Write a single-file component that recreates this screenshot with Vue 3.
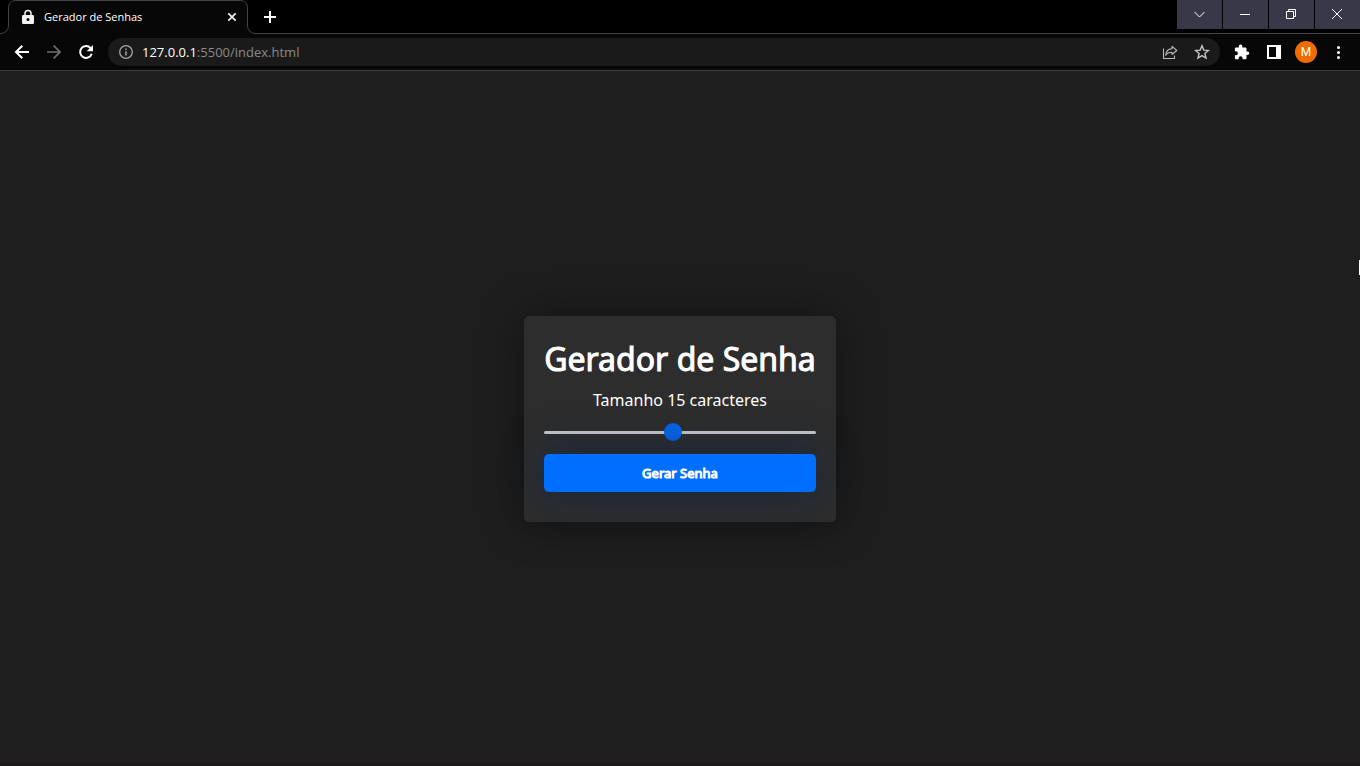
<script setup>
import { ref } from 'vue'

const length = ref(15)
</script>

<template>
  <div class="window">
    <header class="chrome">
      <div class="strip">
        <div class="tab">
          <svg class="outline" viewBox="0 0 256 34" aria-hidden="true">
            <path d="M0 34V33.500C5 33.500 8.500 30 8.500 25V8C8.500 3.500 11.500.5 16 .5H240C244.500.5 247.500 3.500 247.500 8V25C247.500 30 251 33.500 256 33.500V34Z" fill="#070707" />
            <path d="M0 33.500C5 33.500 8.500 30 8.500 25V8C8.500 3.500 11.500.5 16 .5H240C244.500.5 247.500 3.500 247.500 8V25C247.500 30 251 33.500 256 33.500" fill="none" stroke="#444646" />
          </svg>
          <svg class="lock" viewBox="0 0 12 16" aria-hidden="true">
            <path d="M3 7V4.500a3 3 0 0 1 6 0V7" fill="none" stroke="#f1f1f1" stroke-width="1.500" />
            <path fill-rule="evenodd" d="M1.500 6h9A1.300 1.300 0 0 1 12 7.300v6.400A1.300 1.300 0 0 1 10.500 15h-9A1.300 1.300 0 0 1 0 13.700V7.300A1.300 1.300 0 0 1 1.500 6ZM6 9a1.500 1.500 0 1 0 0 3a1.500 1.500 0 0 0 0-3Z" fill="#f1f1f1" />
          </svg>
          <span class="tab-title">Gerador de Senhas</span>
          <button class="plain close-tab" aria-label="Fechar guia">
            <svg width="16" height="16" viewBox="0 0 16 16"><path d="M4.300 4.300l7.400 7.400M11.700 4.300l-7.400 7.400" stroke="#f1f1f1" stroke-width="1.700" /></svg>
          </button>
        </div>
        <button class="plain new-tab" aria-label="Nova guia">
          <svg width="16" height="16" viewBox="0 0 16 16"><path d="M8 2v12M2 8h12" stroke="#fff" stroke-width="2" /></svg>
        </button>
        <div class="controls">
          <button aria-label="Pesquisar guias">
            <svg width="16" height="16" viewBox="0 0 16 16"><path d="M2.500 5l5 5l5-5" /></svg>
          </button>
          <button aria-label="Minimizar">
            <svg width="16" height="16" viewBox="0 0 16 16"><path d="M2 7.500h10" /></svg>
          </button>
          <button aria-label="Restaurar">
            <svg width="16" height="16" viewBox="0 0 16 16"><path d="M2.500 4.500h7v7h-7ZM4.500 4.500v-2h7v7h-2" /></svg>
          </button>
          <button aria-label="Fechar">
            <svg width="16" height="16" viewBox="0 0 16 16"><path d="M2 2l10 10M12 2L2 12" /></svg>
          </button>
        </div>
      </div>

      <div class="toolbar">
        <nav class="nav">
          <button class="plain" aria-label="Voltar">
            <svg width="16" height="16" viewBox="0 0 16 16"><path d="M15 8H2.500M8.300 1.700L2 8l6.300 6.300" fill="none" stroke="#fff" stroke-width="2" /></svg>
          </button>
          <button class="plain" aria-label="Avançar" disabled>
            <svg width="16" height="16" viewBox="0 0 16 16"><path d="M1 8h12.500M7.700 1.700L14 8l-6.300 6.300" fill="none" stroke="#707070" stroke-width="1.700" /></svg>
          </button>
          <button class="plain" aria-label="Recarregar">
            <svg width="16" height="16" viewBox="0 0 16 16"><path d="M12.600 4.200A5.900 5.900 0 1 0 13.700 9.700" fill="none" stroke="#fff" stroke-width="2" /><path d="M15 1v6.300H8.700Z" fill="#fff" /></svg>
          </button>
        </nav>
        <div class="address">
          <svg width="16" height="16" viewBox="0 0 16 16" aria-hidden="true">
            <circle cx="8" cy="8" r="6.300" fill="none" stroke="#a5a8ab" stroke-width="1.300" />
            <path d="M8 7.200v4.200M8 4.500v1.500" stroke="#a5a8ab" stroke-width="1.500" />
          </svg>
          <span class="url"><span class="host">127.0.0.1</span>:5500/index.html</span>
          <button class="plain share" aria-label="Compartilhar">
            <svg width="16" height="16" viewBox="0 0 16 16" fill="none" stroke="#b9b9b9" stroke-width="1.100">
              <path d="M1.500 4.500v10h11v-3" />
              <path d="M10 2.300L14.800 6.500L10 10.500V8.200C7 8.200 5 9.200 3.700 11.300C4 7.500 6 5 10 4.600Z" stroke-linejoin="round" />
            </svg>
          </button>
          <button class="plain" aria-label="Favoritar">
            <svg width="16" height="16" viewBox="0 0 16 16"><path d="M8 1.800l1.800 4.300l4.600.4l-3.500 3l1.100 4.500L8 11.600L4 14l1.100-4.500l-3.500-3l4.600-.4Z" fill="none" stroke="#c5c5c5" stroke-width="1.400" /></svg>
          </button>
        </div>
        <div class="actions">
          <button class="plain" aria-label="Extensões">
            <svg width="16" height="16" viewBox="0 0 16 16"><path d="M13.500 7.500h-1V4.700c0-.7-.6-1.300-1.300-1.300H8.400v-1a1.800 1.800 0 0 0-3.600 0v1H2.100C1.400 3.400.9 4 .9 4.700v2.600h1a2 2 0 0 1 0 4h-1v2.600c0 .7.500 1.300 1.200 1.300h2.600v-1a1.900 1.900 0 0 1 3.900 0v1h2.600c.7 0 1.300-.6 1.300-1.300v-2.800h1a1.800 1.800 0 0 0 0-3.600Z" fill="#fff" /></svg>
          </button>
          <button class="plain" aria-label="Painel lateral">
            <svg width="16" height="16" viewBox="0 0 16 16"><path fill-rule="evenodd" d="M1 1h14v14H1ZM3 3v10h7V3Z" fill="#fff" /></svg>
          </button>
          <button class="avatar" aria-label="Perfil">M</button>
          <button class="plain" aria-label="Menu">
            <svg width="16" height="16" viewBox="0 0 16 16" fill="#fff"><circle cx="8.500" cy="3.500" r="1.500" /><circle cx="8.500" cy="8.500" r="1.500" /><circle cx="8.500" cy="13.500" r="1.500" /></svg>
          </button>
        </div>
      </div>
    </header>

    <main class="page">
      <form class="card" @submit.prevent>
        <h1>Gerador de Senha</h1>
        <label for="length">Tamanho {{ length }} caracteres</label>
        <input id="length" v-model="length" type="range" min="6" max="25" />
        <button class="generate" type="submit">Gerar Senha</button>
      </form>
    </main>
    <span class="caret"></span>
    <span class="edge"></span>
  </div>
</template>

<style>
body {
  margin: 0;
  background: #1e1e1e;
}
</style>

<style scoped>
* {
  box-sizing: border-box;
}

.window {
  position: relative;
  display: flex;
  flex-direction: column;
  min-height: 100vh;
  font-family: "Noto Sans", sans-serif;
  color: #fff;
  background: #1e1e1e;
}

button {
  font-family: inherit;
  border: 0;
  padding: 0;
  color: inherit;
}

svg {
  display: block;
  flex: none;
}

.plain {
  display: flex;
  background: none;
}

.strip {
  display: flex;
  height: 34px;
  background: #000;
  border-bottom: 1px solid #444646;
}

.tab {
  position: relative;
  display: flex;
  align-items: center;
  width: 256px;
  height: 34px;
  padding: 0 16px 0 22px;
}

.outline {
  position: absolute;
  inset: 0;
  width: 256px;
  height: 34px;
}

.lock {
  position: relative;
  width: 12px;
  height: 16px;
}

.tab-title {
  position: relative;
  flex: 1;
  margin-left: 10px;
  font-family: "Open Sans", sans-serif;
  font-size: 11px;
  line-height: 16px;
}

.close-tab {
  position: relative;
}

.new-tab {
  align-self: center;
  margin-left: 6px;
}

.controls {
  display: flex;
  gap: 1px;
  height: 29px;
  margin-left: auto;
}

.controls button {
  display: flex;
  align-items: center;
  justify-content: center;
  width: 45px;
  background: #383848;
}

.controls svg {
  fill: none;
  stroke: #fff;
  stroke-width: 1;
}

.toolbar {
  display: flex;
  align-items: center;
  height: 37px;
  padding: 0 14px;
  background: #070707;
  border-bottom: 1px solid #3c3c3c;
}

.nav {
  display: flex;
  gap: 16px;
  margin-right: 14px;
}

.address {
  display: flex;
  flex: 1;
  align-items: center;
  height: 28px;
  padding: 0 10px;
  border-radius: 14px;
  background: #1a1a1a;
}

.url {
  margin-left: 8px;
  font-family: "Open Sans", sans-serif;
  font-size: 13px;
  line-height: 20px;
  color: #8a8a8a;
}

.host {
  color: #fff;
}

.share {
  margin: 0 16px 0 auto;
}

.actions {
  display: flex;
  align-items: center;
  gap: 16px;
  margin-left: 14px;
}

.avatar {
  width: 22px;
  height: 22px;
  margin: 0 -3px;
  border-radius: 50%;
  background: #f06c00;
  font-family: Roboto, sans-serif;
  font-size: 12px;
  line-height: 22px;
}

.page {
  display: flex;
  flex: 1;
  align-items: center;
  justify-content: center;
}

.card {
  display: flex;
  flex-direction: column;
  width: 312px;
  padding: 20px 20px 30px;
  border-radius: 5px;
  background: #2d2d2d;
  box-shadow: 0 0 40px rgba(0, 0, 0, 0.4);
  text-align: center;
}

h1 {
  margin: 0;
  font-size: 32px;
  font-weight: 400;
  line-height: 46px;
  white-space: nowrap;
  -webkit-text-stroke: 1px #fff;
}

label {
  margin-top: 6px;
  font-size: 16px;
  line-height: 24px;
}

input {
  appearance: none;
  width: 100%;
  height: 3px;
  margin: 19px 0 20px;
  border-radius: 2px;
  background: #c8c8c9;
}

input::-webkit-slider-thumb {
  appearance: none;
  width: 18px;
  height: 18px;
  border-radius: 50%;
  background: #0566e8;
}

.generate {
  height: 38px;
  border-radius: 5px;
  background: #006eff;
  box-shadow: 0 0 40px rgba(4, 34, 76, 0.6);
  font-size: 13px;
  font-weight: 400;
  -webkit-text-stroke: 1px #fff;
}

.caret {
  position: absolute;
  top: 260px;
  right: 0;
  width: 1px;
  height: 15px;
  background: #fff;
}

.edge {
  position: absolute;
  right: 0;
  bottom: 0;
  left: 0;
  height: 3px;
  background: #1c191a;
}
</style>
